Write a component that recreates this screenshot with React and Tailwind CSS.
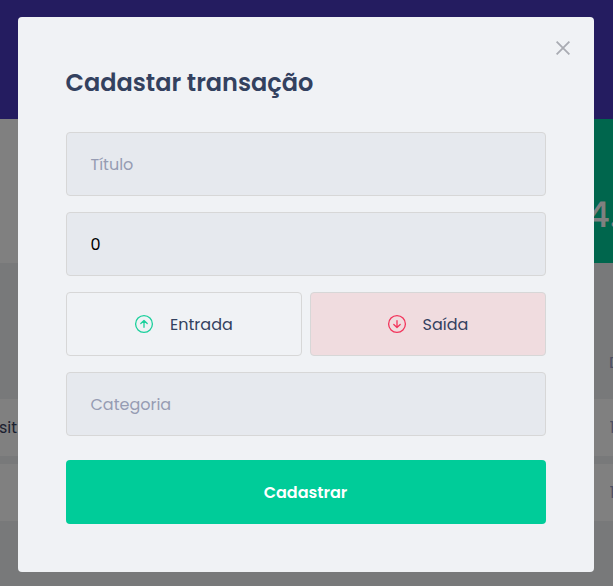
import React from "react";

function ArrowCircle({ down = false }) {
  return (
    <svg
      className={down ? "-mr-[0.7px] size-5 rotate-180 text-[#f2355c]" : "size-5 text-[#1bd09c]"}
      viewBox="0 0 20 20"
      fill="none"
      stroke="currentColor"
      strokeWidth="1.3"
      strokeLinecap="round"
      strokeLinejoin="round"
    >
      <circle cx="10" cy="10" r="8.4" />
      <path d="M10 13.3V6.8M6.8 9.5L10 6.5l3.2 3" />
    </svg>
  );
}

function Row({ left, right }) {
  return (
    <div className="flex h-[57px] items-center justify-between bg-[#808080] text-base">
      <span className="-ml-px text-[#1b2030]">{left}</span>
      <span className="w-[3.5px] overflow-hidden whitespace-nowrap text-[#4b5064]">{right}</span>
    </div>
  );
}

function Dashboard() {
  return (
    <div className="flex h-full flex-col bg-[#78797a]">
      <header className="h-[119px] shrink-0 bg-[#241c60]" />
      <section className="flex h-36 shrink-0">
        <div className="flex-1 bg-[#808080]" />
        <div className="w-[120px] overflow-hidden bg-[#00664d] pt-[69px] pl-[93.5px] text-[36px] leading-[54px] font-medium whitespace-nowrap text-[#808080]">
          4.000
        </div>
      </section>
      <div className="flex h-[136px] shrink-0 items-end justify-end pb-6">
        <span className="w-[4px] overflow-hidden whitespace-nowrap text-[#4b5064]">Data</span>
      </div>
      <div className="flex flex-col gap-2">
        <Row left="sit" right="12/02" />
        <Row left="" right="12/02" />
      </div>
    </div>
  );
}

function Field({ children, className }) {
  return (
    <div
      className={`mb-4 flex h-16 items-center rounded-[4px] border border-[#d7d7d7] bg-[#e6e9ee] px-[23.5px] pt-px ${className}`}
    >
      {children}
    </div>
  );
}

export default function App() {
  return (
    <div className="relative h-[586px] w-[613px] overflow-hidden font-['Poppins','Inter',sans-serif]">
      <Dashboard />
      <div className="absolute inset-0 flex items-start pt-[17px] pl-[18px]">
        <div className="relative h-[555px] w-[576px] rounded-[4px] bg-[#f0f2f5] p-12">
          <button className="absolute top-6 right-6 text-[#a9abb2]">
            <svg className="size-[14px]" viewBox="0 0 14 14" stroke="currentColor" strokeWidth="1.8">
              <path d="M.6.6l12.8 12.8M13.4.6L.6 13.4" />
            </svg>
          </button>
          <h2 className="mb-8 -ml-[0.5px] h-[35px] text-2xl leading-[36px] font-semibold whitespace-nowrap text-[#33415f]">
            Cadastar transação
          </h2>
          <Field className="text-[#969cb3]">Título</Field>
          <Field className="text-black">0</Field>
          <div className="mb-4 flex gap-2 text-[#33415f]">
            <button className="flex h-16 flex-1 items-center justify-center gap-4 rounded-[4px] border border-[#d7d7d7] pr-[1.4px]">
              <ArrowCircle />
              <span className="pt-px">Entrada</span>
            </button>
            <button className="flex h-16 flex-1 items-center justify-center gap-4 rounded-[4px] border border-[#d7d7d7] bg-[#f0dcdf] pr-[0.8px]">
              <ArrowCircle down />
              <span className="pt-px">Saída</span>
            </button>
          </div>
          <Field className="text-[#969cb3]">Categoria</Field>
          <button className="mt-2 h-16 w-full rounded-[4px] bg-[#00cc99] pt-px pr-px font-semibold text-white">
            Cadastrar
          </button>
        </div>
      </div>
    </div>
  );
}
